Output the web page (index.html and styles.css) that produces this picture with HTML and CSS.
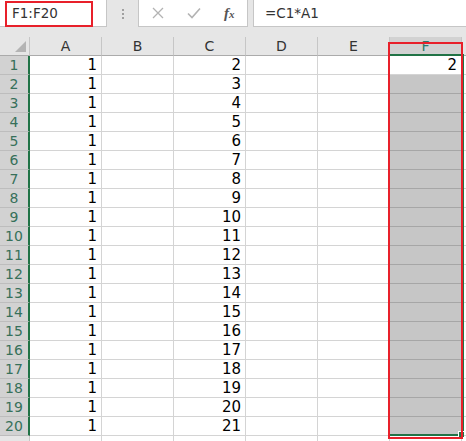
FILE: index.html
```html
<!DOCTYPE html>
<html>
<head>
<meta charset="utf-8">
<link rel="stylesheet" href="styles.css">
</head>
<body>
<div class="app">
  <div class="topbar">
    <div class="namebox">F1:F20</div>
    <div class="grip"><span></span><span></span><span></span></div>
    <div class="tools">
      <svg class="ico" width="12" height="12" viewBox="0 0 12 12"><path d="M1 1L11 11M11 1L1 11" stroke="#b3b3b3" stroke-width="1.3" fill="none"/></svg>
      <svg class="ico" width="14" height="12" viewBox="0 0 14 12"><path d="M1 6.5L5 10.5L13 1.5" stroke="#b3b3b3" stroke-width="1.6" fill="none"/></svg>
      <span class="fx">f<span class="fxx">x</span></span>
    </div>
    <div class="formula">=C1*A1</div>
  </div>
  <div class="gap"></div>
  <div class="sheet">
    <div class="corner"><svg width="11" height="11" viewBox="0 0 11 11"><path d="M11 0L11 11L0 11Z" fill="#b4b4b4"/></svg></div>
    <div class="ch">A</div><div class="ch">B</div><div class="ch">C</div><div class="ch">D</div><div class="ch">E</div><div class="ch chs">F</div><div class="ch"></div>

    <div class="rh">1</div><div class="c n">1</div><div class="c"></div><div class="c n">2</div><div class="c"></div><div class="c"></div><div class="c act n">2</div><div class="c"></div>
    <div class="rh">2</div><div class="c n">1</div><div class="c"></div><div class="c n">3</div><div class="c"></div><div class="c"></div><div class="c sel"></div><div class="c"></div>
    <div class="rh">3</div><div class="c n">1</div><div class="c"></div><div class="c n">4</div><div class="c"></div><div class="c"></div><div class="c sel"></div><div class="c"></div>
    <div class="rh">4</div><div class="c n">1</div><div class="c"></div><div class="c n">5</div><div class="c"></div><div class="c"></div><div class="c sel"></div><div class="c"></div>
    <div class="rh">5</div><div class="c n">1</div><div class="c"></div><div class="c n">6</div><div class="c"></div><div class="c"></div><div class="c sel"></div><div class="c"></div>
    <div class="rh">6</div><div class="c n">1</div><div class="c"></div><div class="c n">7</div><div class="c"></div><div class="c"></div><div class="c sel"></div><div class="c"></div>
    <div class="rh">7</div><div class="c n">1</div><div class="c"></div><div class="c n">8</div><div class="c"></div><div class="c"></div><div class="c sel"></div><div class="c"></div>
    <div class="rh">8</div><div class="c n">1</div><div class="c"></div><div class="c n">9</div><div class="c"></div><div class="c"></div><div class="c sel"></div><div class="c"></div>
    <div class="rh">9</div><div class="c n">1</div><div class="c"></div><div class="c n">10</div><div class="c"></div><div class="c"></div><div class="c sel"></div><div class="c"></div>
    <div class="rh">10</div><div class="c n">1</div><div class="c"></div><div class="c n">11</div><div class="c"></div><div class="c"></div><div class="c sel"></div><div class="c"></div>
    <div class="rh">11</div><div class="c n">1</div><div class="c"></div><div class="c n">12</div><div class="c"></div><div class="c"></div><div class="c sel"></div><div class="c"></div>
    <div class="rh">12</div><div class="c n">1</div><div class="c"></div><div class="c n">13</div><div class="c"></div><div class="c"></div><div class="c sel"></div><div class="c"></div>
    <div class="rh">13</div><div class="c n">1</div><div class="c"></div><div class="c n">14</div><div class="c"></div><div class="c"></div><div class="c sel"></div><div class="c"></div>
    <div class="rh">14</div><div class="c n">1</div><div class="c"></div><div class="c n">15</div><div class="c"></div><div class="c"></div><div class="c sel"></div><div class="c"></div>
    <div class="rh">15</div><div class="c n">1</div><div class="c"></div><div class="c n">16</div><div class="c"></div><div class="c"></div><div class="c sel"></div><div class="c"></div>
    <div class="rh">16</div><div class="c n">1</div><div class="c"></div><div class="c n">17</div><div class="c"></div><div class="c"></div><div class="c sel"></div><div class="c"></div>
    <div class="rh">17</div><div class="c n">1</div><div class="c"></div><div class="c n">18</div><div class="c"></div><div class="c"></div><div class="c sel"></div><div class="c"></div>
    <div class="rh">18</div><div class="c n">1</div><div class="c"></div><div class="c n">19</div><div class="c"></div><div class="c"></div><div class="c sel"></div><div class="c"></div>
    <div class="rh">19</div><div class="c n">1</div><div class="c"></div><div class="c n">20</div><div class="c"></div><div class="c"></div><div class="c sel"></div><div class="c"></div>
    <div class="rh">20</div><div class="c n">1</div><div class="c"></div><div class="c n">21</div><div class="c"></div><div class="c"></div><div class="c sel"></div><div class="c"></div>
    <div class="rh off"></div><div class="c"></div><div class="c"></div><div class="c"></div><div class="c"></div><div class="c"></div><div class="c"></div><div class="c"></div>
  </div>
  <div class="selection"></div>
  <div class="handle"></div>
  <div class="mark mark-name"></div>
  <div class="mark mark-col"></div>
</div>
</body>
</html>
```

FILE: styles.css
```css
html, body {
  margin: 0;
  padding: 0;
  background: #e6e6e6;
  overflow: hidden;
}
.app {
  position: relative;
  width: 466px;
  height: 441px;
  overflow: hidden;
  font-family: "DejaVu Sans", "Noto Sans CJK SC", sans-serif;
  color: #222;
}
.topbar {
  display: flex;
  height: 27px;
  background: #e6e6e6;
}
.namebox {
  width: 107px;
  box-sizing: border-box;
  background: #fff;
  border-right: 1px solid #c6c6c6;
  border-bottom: 1px solid #c6c6c6;
  padding-left: 12px;
  font-size: 13.5px;
  line-height: 26px;
  color: #333;
}
.grip {
  width: 31px;
  display: flex;
  flex-direction: column;
  align-items: center;
  justify-content: center;
  gap: 2px;
}
.grip span {
  width: 2px;
  height: 2px;
  background: #a0a0a0;
}
.tools {
  width: 110px;
  box-sizing: border-box;
  background: #fff;
  border-left: 1px solid #c6c6c6;
  border-right: 1px solid #c6c6c6;
  border-bottom: 1px solid #c6c6c6;
  display: flex;
  align-items: center;
  padding-left: 13px;
}
.ico { display: block; }
.ico + .ico { margin-left: 23px; }
.fx {
  margin-left: 23px;
  font-family: "Liberation Serif", "DejaVu Serif", serif;
  font-style: italic;
  font-weight: bold;
  font-size: 15px;
  color: #555;
}
.fxx { font-size: 11px; }
.formula {
  flex: 1;
  margin-left: 5px;
  background: #fff;
  border-left: 1px solid #c6c6c6;
  border-bottom: 1px solid #c6c6c6;
  padding-left: 11px;
  font-size: 13.5px;
  line-height: 26px;
  color: #333;
}
.gap { height: 10px; }
.sheet {
  display: grid;
  grid-template-columns: 30px repeat(6, 72px) 1fr;
  grid-template-rows: 19px;
  grid-auto-rows: 19px;
  background: #fff;
}
.corner {
  background: #e6e6e6;
  border-right: 1px solid #c6c6c6;
  border-bottom: 1px solid #ababab;
  box-sizing: border-box;
  display: flex;
  align-items: flex-end;
  justify-content: flex-end;
  padding: 0 3px 3px 0;
}
.ch {
  background: #e6e6e6;
  box-sizing: border-box;
  border-right: 1px solid #c6c6c6;
  border-bottom: 1px solid #ababab;
  text-align: center;
  font-size: 14px;
  line-height: 19px;
  color: #333;
}
.chs {
  background: #d2d2d2;
  color: #2b7a6c;
  border-bottom: 2px solid #217346;
}
.rh {
  background: #d2d2d2;
  box-sizing: border-box;
  border-right: 2px solid #217346;
  border-bottom: 1px solid #bdbdbd;
  text-align: center;
  font-size: 14px;
  line-height: 19px;
  color: #37705a;
}
.rh.off {
  background: #e6e6e6;
  border-right: 1px solid #c6c6c6;
}
.c {
  box-sizing: border-box;
  border-right: 1px solid #d4d4d4;
  border-bottom: 1px solid #d4d4d4;
  font-size: 15px;
  line-height: 19px;
  padding-right: 4px;
  color: #000;
  overflow: hidden;
}
.n { text-align: right; }
.sel {
  background: #c6c6c6;
  border-bottom: 1px solid #a6a6a6;
}
.act { background: #fff; }
.selection {
  position: absolute;
  left: 388px;
  top: 54px;
  width: 76px;
  height: 382px;
  box-sizing: border-box;
  border: 2px solid #217346;
}
.handle {
  position: absolute;
  left: 458px;
  top: 431px;
  width: 6px;
  height: 6px;
  box-sizing: border-box;
  background: #217346;
  border-left: 1px solid #fff;
  border-top: 1px solid #fff;
}
.mark {
  position: absolute;
  box-sizing: border-box;
  border: 2px solid #e8202a;
}
.mark-name {
  left: 5px;
  top: 1px;
  width: 88px;
  height: 26px;
}
.mark-col {
  left: 388px;
  top: 42px;
  width: 75px;
  height: 397px;
}
```
